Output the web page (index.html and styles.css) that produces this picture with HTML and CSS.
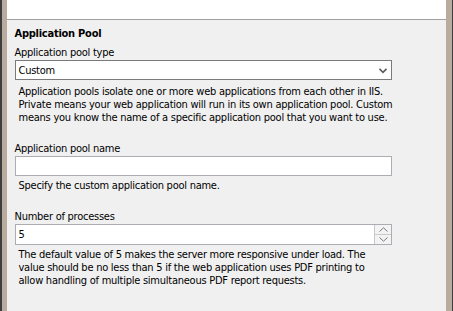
FILE: index.html
```html
<!DOCTYPE html>
<html>
<head>
<meta charset="utf-8">
<link rel="stylesheet" href="styles.css">
</head>
<body>
<div class="frame">
  <div class="edge-dark-l"></div>
  <div class="edge-tan"></div>
  <div class="main">
    <div class="top-white"></div>
    <div class="panel">
      <div class="title">Application Pool</div>
      <div class="label l-type">Application pool type</div>
      <div class="select">
        <span class="sel-text">Custom</span>
        <svg class="chev" width="8" height="6" viewBox="0 0 8 6"><path d="M0.5 0.8 L4 4.3 L7.5 0.8" fill="none" stroke="#5a5a5a" stroke-width="1.6"/></svg>
      </div>
      <div class="desc d-type">Application pools isolate one or more web applications from each other in IIS.<br>Private means your web application will run in its own application pool. Custom<br>means you know the name of a specific application pool that you want to use.</div>
      <div class="label l-name">Application pool name</div>
      <div class="input"></div>
      <div class="desc d-name">Specify the custom application pool name.</div>
      <div class="label l-num">Number of processes</div>
      <div class="numeric">
        <span class="num-text">5</span>
        <div class="spin">
          <div class="spin-btn up"><svg width="9" height="5" viewBox="0 0 9 5"><path d="M0.5 4.5 L4.5 0.8 L8.5 4.5" fill="none" stroke="#7a7a7a" stroke-width="1"/></svg></div>
          <div class="spin-btn down"><svg width="9" height="5" viewBox="0 0 9 5"><path d="M0.5 0.5 L4.5 4.2 L8.5 0.5" fill="none" stroke="#7a7a7a" stroke-width="1"/></svg></div>
        </div>
      </div>
      <div class="desc d-num">The default value of 5 makes the server more responsive under load. The<br>value should be no less than 5 if the web application uses PDF printing to<br>allow handling of multiple simultaneous PDF report requests.</div>
    </div>
  </div>
  <div class="edge-tan edge-tan-r"></div>
  <div class="edge-dark-r"></div>
</div>
</body>
</html>
```

FILE: styles.css
```css
* { box-sizing: border-box; }
html, body { margin: 0; padding: 0; }
body {
  width: 453px;
  height: 311px;
  overflow: hidden;
  font-family: "DejaVu Sans Condensed", "DejaVu Sans", sans-serif;
  font-stretch: condensed;
  font-size: 11px;
  letter-spacing: -0.25px;
  line-height: 13px;
  color: #000;
}
.frame {
  display: flex;
  height: 311px;
}
.edge-dark-l { width: 2px; background: #3e3e3e; }
.edge-tan { width: 6px; background: #b9ab9e; }
.edge-tan-r { width: 7px; }
.edge-dark-r { width: 1px; background: #3e3e3e; }
.main {
  flex: 1;
  display: flex;
  flex-direction: column;
}
.top-white {
  height: 20px;
  background: #fff;
  border-bottom: 1px solid #a0a0a0;
}
.panel {
  flex: 1;
  background: #f0f0f0;
  padding: 7px 54px 0 8px;
}
.title {
  font-weight: bold;
}
.label { white-space: nowrap; }
.l-type { margin-top: 6px; }
.select {
  margin-top: 1px;
  height: 20px;
  background: #fff;
  border: 1px solid #7a7a7a;
  display: flex;
  align-items: center;
  justify-content: space-between;
  padding: 0 4px 0 3px;
}
.chev { margin-top: 1px; }
.desc {
  padding-left: 4px;
  white-space: nowrap;
}
.d-type { margin-top: 5px; }
.l-name { margin-top: 18px; }
.input {
  margin-top: 1px;
  height: 20px;
  background: #fff;
  border: 1px solid #abadb3;
}
.d-name { margin-top: 3px; }
.l-num { margin-top: 18px; }
.numeric {
  margin-top: 1px;
  height: 21px;
  background: #fff;
  border: 1px solid #abadb3;
  display: flex;
  align-items: center;
  justify-content: space-between;
  padding-left: 3px;
}
.spin {
  align-self: stretch;
  width: 17px;
  display: flex;
  flex-direction: column;
  border-left: 1px solid #c9c9c9;
}
.spin-btn {
  flex: 1;
  background: #f3f3f3;
  display: flex;
  align-items: center;
  justify-content: center;
}
.spin-btn.up { border-bottom: 1px solid #c9c9c9; }
.d-num { margin-top: 3px; }
```
